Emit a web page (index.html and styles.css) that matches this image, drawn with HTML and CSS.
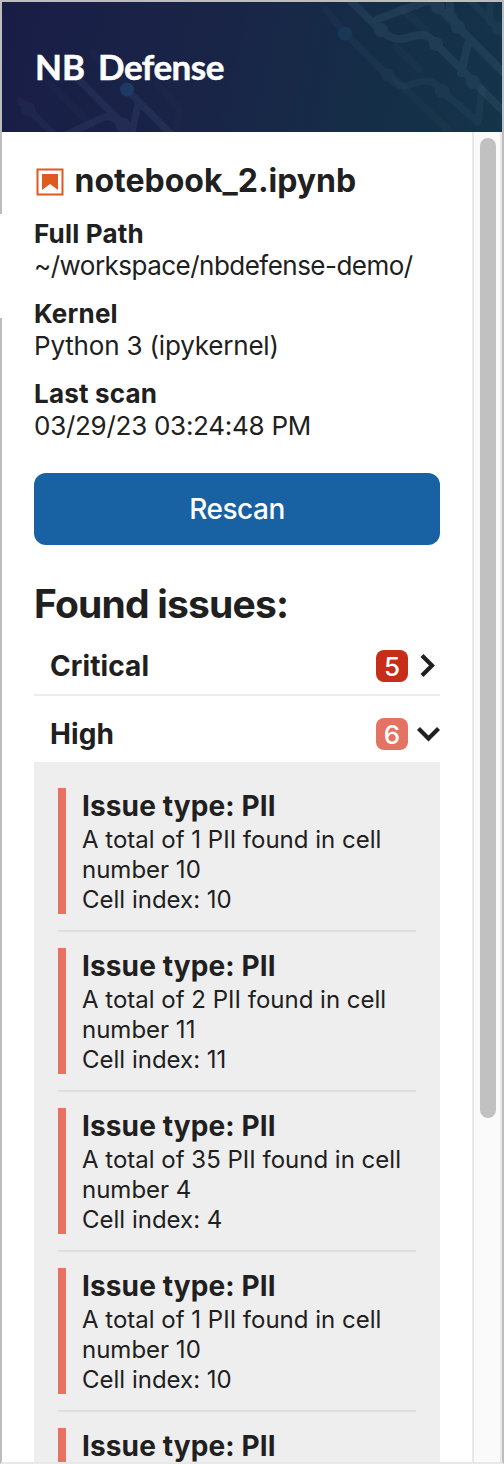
FILE: index.html
```html
<!DOCTYPE html>
<html lang="en">
<head>
<meta charset="utf-8">
<title>NB Defense</title>
<link rel="stylesheet" href="styles.css">
</head>
<body>
<div class="panel">
  <header class="banner">
    <svg class="banner-art" width="500" height="130" viewBox="2 2 500 130" fill="none" stroke-linecap="round" stroke-linejoin="round">
      <g stroke="#40527a" fill="#40527a" opacity=".24" stroke-width="7">
        <path fill="none" d="M75 76 124 125M68 134 102 118Q110 114 118 122M131 94 174 137M132 132 138 104"/>
        <circle cx="123" cy="125" r="4"/>
      </g>
      <g stroke="#40527a" fill="#40527a" opacity=".14" stroke-width="7">
        <path fill="none" d="M20 101 58 138"/>
        <circle cx="28" cy="109" r="4"/>
      </g>
      <g stroke="#40527a" opacity=".06" stroke-width="7">
        <path d="M48 82 92 126M92 53 126 84M158 84 180 110 175 132"/>
      </g>
      <g stroke="#4a7186" opacity=".07" stroke-width="7">
        <path d="M401 8 426 30M396 47 419 69M395 79 448 130M326 10 346 34"/>
      </g>
      <g stroke="#4a7186" fill="#4a7186" opacity=".19" stroke-width="8">
        <path fill="none" d="M350 0 376 26 387 35Q395 41 407 38C419 34 427 32 436 44L504 112"/>
        <path fill="none" d="M376 20 424 2Q432 0 438 7L504 73M450 0V12L458 25M468 44 461 73"/>
        <circle cx="381" cy="30" r="3"/><circle cx="436" cy="44" r="3"/>
        <circle cx="438" cy="7" r="3"/><circle cx="458" cy="27" r="3"/>
        <circle cx="473" cy="82" r="3"/>
      </g>
      <g stroke="#4a7186" fill="#4a7186" opacity=".11" stroke-width="7">
        <path fill="none" d="M346 34 389 77Q400 91 412 84C427 79 434 80 442 91L478 122M482 89 478 120M470 0 504 34M490 0V22"/>
        <circle cx="388" cy="75" r="3"/><circle cx="442" cy="91" r="4"/><circle cx="498" cy="28" r="3"/>
      </g>
      <circle cx="127" cy="89.500" r="7" fill="#1c3a63"/>
      <circle cx="345" cy="33.500" r="7" fill="#193858"/>
    </svg>
    <div class="brand"><span>NB</span><span class="brand-name">Defense</span></div>
  </header>
  <div class="body">
    <main class="content">
      <h1 class="file">
        <svg class="file-icon" width="28" height="28" viewBox="0 0 28 28"><path fill="none" stroke="#de5a20" stroke-width="2" d="M1.500 1.500h25v25h-25z"/><path fill="#de5a20" d="M6 6h16v16l-8-6-8 6z"/></svg>
        <span>notebook_2.ipynb</span>
      </h1>
      <dl class="meta">
        <div class="meta-item"><dt>Full Path</dt><dd class="path">~/workspace/nbdefense-demo/</dd></div>
        <div class="meta-item"><dt>Kernel</dt><dd class="kernel">Python 3 (ipykernel)</dd></div>
        <div class="meta-item"><dt>Last scan</dt><dd>03/29/23 03:24:48 PM</dd></div>
      </dl>
      <button class="rescan">Rescan</button>
      <h2 class="found">Found issues:</h2>
      <div class="severity severity-closed">
        <span class="severity-name">Critical</span>
        <span class="badge badge-critical">5</span>
        <svg class="chevron" width="24" height="24" viewBox="0 0 24 24"><path d="M6 1.500 16 11.500 6 21.500"/></svg>
      </div>
      <div class="severity severity-open">
        <span class="severity-name">High</span>
        <span class="badge badge-high">6</span>
        <svg class="chevron" width="24" height="24" viewBox="0 0 24 24"><path d="M2.500 6.500 12.500 16.500 22.500 6.500"/></svg>
      </div>
      <div class="issues">
        <article class="issue"><div class="issue-text"><h3>Issue type: PII</h3><p>A total of 1 PII found in cell<br>number 10<br>Cell index: 10</p></div></article>
        <article class="issue"><div class="issue-text"><h3>Issue type: PII</h3><p>A total of 2 PII found in cell<br>number 11<br>Cell index: 11</p></div></article>
        <article class="issue"><div class="issue-text"><h3>Issue type: PII</h3><p>A total of 35 PII found in cell<br>number 4<br>Cell index: 4</p></div></article>
        <article class="issue"><div class="issue-text"><h3>Issue type: PII</h3><p>A total of 1 PII found in cell<br>number 10<br>Cell index: 10</p></div></article>
        <article class="issue issue-last"><div class="issue-text"><h3>Issue type: PII</h3></div></article>
      </div>
    </main>
    <div class="track"><div class="thumb"></div></div>
  </div>
  <div class="edge-gap"></div>
</div>
</body>
</html>
```
FILE: styles.css
```css
* { box-sizing: border-box; margin: 0; padding: 0; }
body {
  background: #fff;
  color: #202020;
  font-family: Inter, "Liberation Sans", sans-serif;
}
.panel {
  position: relative;
  display: flex;
  flex-direction: column;
  height: 1464px;
  border: 2px solid #bdbdbd;
  border-bottom-color: #e8e8e8;
}
.edge-gap {
  position: absolute;
  left: -2px;
  top: 212px;
  width: 2px;
  height: 104px;
  background: #fff;
}
.banner {
  display: flex;
  flex: none;
  align-items: center;
  position: relative;
  height: 130px;
  padding: 0 0 2px 33px;
  background: linear-gradient(102deg, #191d46 0%, #192547 45%, #152d47 72%, #14344a 100%);
}
.banner-art { position: absolute; inset: 0; }
.brand {
  display: flex;
  gap: 13px;
  position: relative;
  color: #fff;
  font: 700 35px/44px Lato, sans-serif;
  white-space: nowrap;
  -webkit-text-stroke: .5px #fff;
}
.brand-name { letter-spacing: -.5px; }
.body { display: flex; flex: 1; min-height: 0; }
.content { width: 438px; flex: none; margin-right: 32px; padding: 30px 0 0 32px; }
.track {
  width: 30px;
  flex: none;
  border: solid #e8e8e8;
  border-width: 0 2px;
  background: #fafafa;
  padding: 6px 4px 0 6px;
}
.thumb { width: 16px; height: 980px; border-radius: 8px; background: #c1c1c1; }
.file { display: flex; gap: 10.500px; height: 40px; padding-left: 2px; font-size: 32px; font-weight: 700; line-height: 38px; letter-spacing: 0; white-space: nowrap; }
.file-icon { flex: none; margin-top: 6px; }
.meta { display: grid; gap: 16px; margin-top: 16px; font-size: 26px; line-height: 32px; white-space: nowrap; }
.meta dt { font-weight: 700; letter-spacing: .2px; }
.meta dd { letter-spacing: -.27px; }
.meta .path { letter-spacing: -.52px; }
.meta .kernel { letter-spacing: -.18px; }
.rescan {
  display: block;
  width: 406px;
  height: 72px;
  margin-top: 31px;
  border: 0;
  border-radius: 12px;
  background: #1861a3;
  color: #fff;
  font: 450 28px/72px Inter, sans-serif;
  letter-spacing: -.5px;
}
.found { height: 48px; margin-top: 35px; font-size: 39px; line-height: 48px; letter-spacing: -.8px; white-space: nowrap; }
.severity { display: flex; align-items: center; padding-left: 16px; }
.severity-closed { height: 68px; padding-top: 10px; border-bottom: 2px solid #ededed; }
.severity-open { height: 66px; padding-top: 10px; }
.severity-name { flex: 1; font-size: 28px; font-weight: 700; line-height: 32px; letter-spacing: .1px; }
.badge { width: 32px; height: 32px; border-radius: 8px; color: #fff; font-size: 26px; font-weight: 500; line-height: 34px; text-align: center; }
.badge-critical { background: #c62e19; }
.badge-high { background: #e57364; }
.chevron { margin-left: 8px; fill: none; stroke: #202020; stroke-width: 4.200; }
.issues { height: 700px; padding: 26px 24px 0; background: #eee; }
.issue { height: 144px; margin-bottom: 16px; border-bottom: 2px solid #dfdfdf; }
.issue-text { height: 126px; padding-left: 16px; border-left: 8px solid #e57364; white-space: nowrap; }
.issue h3 { padding: 3px 0; font-size: 28px; line-height: 31px; letter-spacing: .13px; }
.issue p { font-size: 24px; line-height: 30px; letter-spacing: 0; }
.issue-last { height: 34px; margin-bottom: 0; border-bottom: 0; }
.issue-last .issue-text { height: 34px; }
.issue-last h3 { padding-bottom: 0; }
```
